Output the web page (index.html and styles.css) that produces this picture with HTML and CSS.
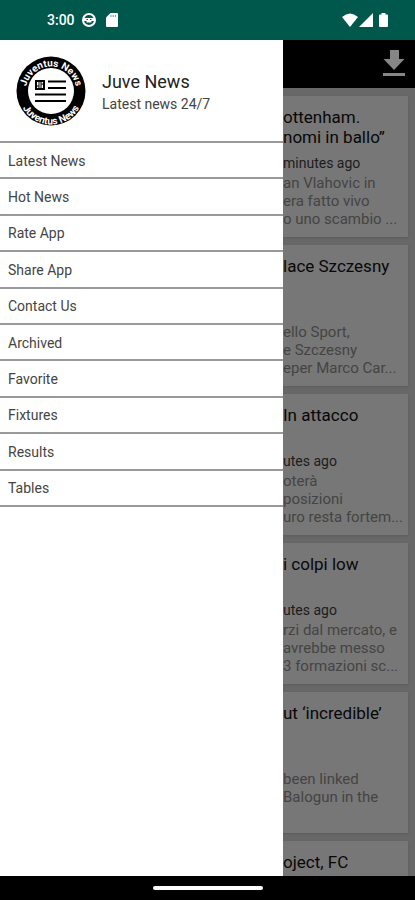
FILE: index.html
```html
<!DOCTYPE html>
<html lang="en">
<head>
    <meta charset="utf-8">
    <meta name="viewport" content="width=device-width, initial-scale=1">
    <title>Juve News</title>
    <link rel="stylesheet" href="styles.css">
</head>

<body>
    <!-- START STATUS BAR -->
    <header class="status-bar">
        <span class="clock">3:00</span>
        <svg class="status-icon" width="14" height="14" viewBox="0 0 14 14">
            <circle cx="7" cy="7" r="6" fill="none" stroke="#fff" stroke-width="2"/>
            <path d="M2 5h10v3H9.500v1.500h-5V8H2z" fill="#fff"/>
            <path d="M4.500 6.500h1.500M8 6.500h1.500" stroke="#00574b"/>
        </svg>
        <svg class="status-icon" width="12" height="14" viewBox="0 0 12 14">
            <path d="M4.500 0H11q1 0 1 1v12q0 1-1 1H1q-1 0-1-1V4.500z" fill="#fff"/>
            <path d="M5 2v2M7.200 2v2M9.400 2v2" stroke="#00574b" stroke-width=".6"/>
        </svg>
        <div class="signals">
            <svg width="16" height="14" viewBox="0 0 16 14">
                <path d="M0 4Q8-3 16 4L8 14z" fill="#fff"/>
            </svg>
            <svg width="14" height="14" viewBox="0 0 14 14">
                <path d="M14 0v14H0z" fill="#fff"/>
            </svg>
            <svg class="battery" width="9" height="14" viewBox="0 0 9 14">
                <path d="M2.500 0h4v1.500H8q1 0 1 1V13q0 1-1 1H1q-1 0-1-1V2.500q0-1 1-1h1.500z" fill="#fff"/>
            </svg>
        </div>
    </header>
    <!-- END STATUS BAR -->

    <div class="screen">
        <!-- START DRAWER -->
        <aside class="drawer">
            <div class="drawer-header">
                <svg class="logo" width="70" height="70" viewBox="0 0 70 70">
                    <defs>
                        <path id="arc-top" d="M9.500 36A25.500 25.500 0 0 1 60.500 36"/>
                        <path id="arc-bottom" d="M2.500 36A32.500 32.500 0 0 0 67.500 36"/>
                    </defs>
                    <circle cx="35" cy="35" r="34.500" fill="#000"/>
                    <circle cx="35" cy="35" r="23" fill="#fff"/>
                    <text class="logo-text"><textPath href="#arc-top" startOffset="50%">Juventus News</textPath></text>
                    <text class="logo-text"><textPath href="#arc-bottom" startOffset="50%">Juventus News</textPath></text>
                    <rect x="20" y="25" width="8" height="8" fill="none" stroke="#000" stroke-width="2"/>
                    <path d="M22 27h4v2h-4v2h4" fill="none" stroke="#000"/>
                    <path d="M32 25.500h18M32 32h18M19 38.500h31M19 45h31" stroke="#000" stroke-width="2.200"/>
                </svg>
                <div class="drawer-title">
                    <h1>Juve News</h1>
                    <p>Latest news 24/7</p>
                </div>
            </div>
            <nav class="menu">
                <a href="#">Latest News</a>
                <a href="#">Hot News</a>
                <a href="#">Rate App</a>
                <a href="#">Share App</a>
                <a href="#">Contact Us</a>
                <a href="#">Archived</a>
                <a href="#">Favorite</a>
                <a href="#">Fixtures</a>
                <a href="#">Results</a>
                <a href="#">Tables</a>
            </nav>
        </aside>
        <!-- END DRAWER -->

        <!-- START NEWS FEED -->
        <main class="feed">
            <div class="toolbar">
                <button class="download" aria-label="Download">
                    <svg width="22" height="27" viewBox="0 0 22 27">
                        <path d="M7 0h9v9h5.500L11 20 .5 9H7zM0 23h22v3H0z" fill="#868686"/>
                    </svg>
                </button>
            </div>
            <div class="cards">
                <article class="card">
                    <h2>ottenham.<br>nomi in ballo”</h2>
                    <p class="time">minutes ago</p>
                    <p class="text">an Vlahovic in<br>era fatto vivo<br>o uno scambio ...</p>
                </article>
                <article class="card">
                    <h2>lace Szczesny</h2>
                    <p class="time"></p>
                    <p class="text">ello Sport,<br>e Szczesny<br>eper Marco Car...</p>
                </article>
                <article class="card">
                    <h2>In attacco</h2>
                    <p class="time">utes ago</p>
                    <p class="text">oterà<br>posizioni<br>uro resta fortem...</p>
                </article>
                <article class="card">
                    <h2>i colpi low</h2>
                    <p class="time">utes ago</p>
                    <p class="text">rzi dal mercato, e<br>avrebbe messo<br>3 formazioni sc...</p>
                </article>
                <article class="card">
                    <h2>ut ‘incredible’</h2>
                    <p class="time"></p>
                    <p class="text">been linked<br>Balogun in the</p>
                </article>
                <article class="card">
                    <h2>oject, FC</h2>
                </article>
            </div>
        </main>
        <!-- END NEWS FEED -->
    </div>

    <footer class="nav-bar"><span class="home-handle"></span></footer>
</body>
</html>
```
FILE: styles.css
```css
* {
    box-sizing: border-box;
}
body {
    background: #000;
    display: flex;
    flex-direction: column;
    font-family: Roboto, "Liberation Sans", sans-serif;
    height: 100vh;
    margin: 0;
    overflow: hidden;
}
h1, h2, p {
    font-weight: normal;
    margin: 0;
}

/* status bar */
.status-bar {
    align-items: center;
    background: #00574b;
    color: #fff;
    display: flex;
    flex: none;
    height: 40px;
    padding: 0 27px 0 47px;
}
.clock {
    font-size: 14px;
    font-weight: 500;
}
.status-icon {
    margin-left: 7px;
}
.status-icon + .status-icon {
    margin-left: 10px;
}
.signals {
    display: flex;
    gap: 1px;
    margin-left: auto;
}
.battery {
    margin-left: 5px;
}

.screen {
    display: grid;
    flex: 1;
    grid-template-columns: 283fr 132fr;
    min-height: 0;
}

/* drawer */
.drawer {
    background: #fff;
    min-width: 0;
}
.drawer-header {
    align-items: center;
    border-bottom: 2px solid #999;
    display: flex;
    gap: 16px;
    padding: 16px 16px 15px;
}
.drawer-title {
    padding-top: 2px;
}
.drawer-title h1 {
    color: #222;
    font-size: 18px;
    line-height: 24px;
}
.drawer-title p {
    color: #444;
    font-size: 14px;
    line-height: 20px;
}
.logo-text {
    fill: #fff;
    font-size: 10px;
    font-weight: bold;
    text-anchor: middle;
}
.menu {
    display: grid;
    grid-auto-rows: 1fr;
    min-height: 364px;
}
.menu a {
    align-items: center;
    border-bottom: 2px solid #999;
    color: #444;
    display: flex;
    font-size: 14px;
    padding: 1px 8px 0;
    text-decoration: none;
}

/* news feed */
.feed {
    background: #686868;
    min-width: 0;
    overflow: hidden;
}
.toolbar {
    background: #000;
    display: flex;
    height: 48px;
    justify-content: flex-end;
    padding: 10px 10px 0;
}
.download {
    background: none;
    border: 0;
    height: 27px;
    padding: 0;
}
.cards {
    display: flex;
    flex-direction: column;
    gap: 8px;
    padding: 8px 7px 0 0;
}
.card {
    background: #777;
    box-shadow: 0 1px 2px #5c5c5c;
    min-height: 141px;
    padding-top: 11px;
    white-space: nowrap;
}
.card h2 {
    color: #080808;
    font-size: 17px;
    line-height: 20px;
    min-height: 46px;
}
.card .time {
    color: #1c1c1c;
    font-size: 14px;
    line-height: 21px;
    min-height: 21px;
}
.card .text {
    color: #444;
    font-size: 15px;
    line-height: 18px;
}

.nav-bar {
    align-items: center;
    background: #000;
    display: flex;
    flex: none;
    height: 24px;
    justify-content: center;
}
.home-handle {
    background: #fff;
    border-radius: 2px;
    height: 4px;
    width: 110px;
}
```
